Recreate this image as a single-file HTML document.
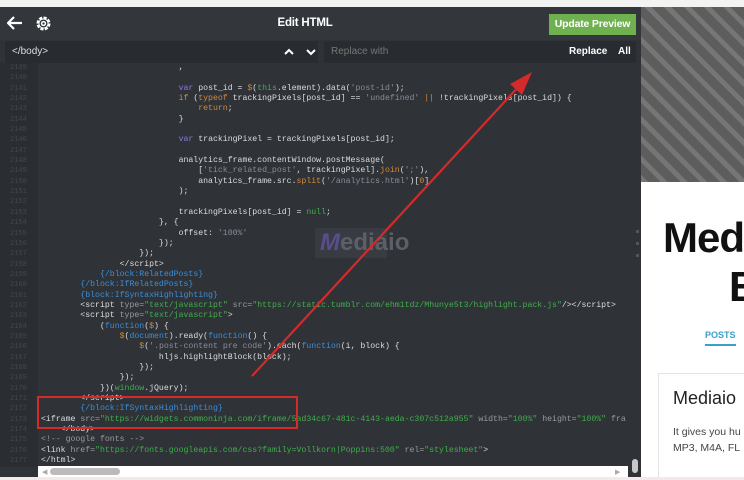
<!DOCTYPE html>
<html><head><style>
*{margin:0;padding:0;box-sizing:border-box}
body{width:744px;height:480px;overflow:hidden;background:#fff;position:relative;font-family:"Liberation Sans",sans-serif}
.ed{position:absolute;left:0;top:7px;width:641px;height:473px;background:#2f3338}
.hdr{position:absolute;left:0;top:0;width:641px;height:33px;background:#33373c}
.title{position:absolute;left:0;width:610px;top:10px;text-align:center;color:#fff;font-weight:bold;font-size:11.5px;letter-spacing:-0.2px}
.btn{position:absolute;left:549px;top:7px;width:87px;height:21px;background:#6fb04f;color:#fff;font-weight:bold;font-size:10.5px;text-align:center;line-height:21px;letter-spacing:-0.2px}
.sb{position:absolute;top:34px;height:22px;background:#282b30;font-size:10px;line-height:22px}
.code{position:absolute;left:0;top:56px;width:630px;height:404px;background:#2f3338;overflow:hidden}
.gut{position:absolute;left:0;top:0;width:38px;height:404px;background:#2a2d31}
.ln{position:absolute;left:41px;top:0;font-family:"Liberation Mono",monospace;font-size:8.2px;line-height:10.34px;color:#dcdcdc;white-space:pre}
.gn{position:absolute;left:10px;top:0;font-family:"Liberation Mono",monospace;font-size:7px;line-height:10.34px;color:#44484e;white-space:pre}
.k{color:#8b78e0}.o{color:#d4883a}.s{color:#8a8a9a}.g{color:#3fae4a}.b{color:#3c8dd8}.a{color:#9a9a9a}.n{color:#3fae4a}
.hs{position:absolute;left:38px;top:459px;width:590px;height:12px;background:#fff}
.pv{position:absolute;left:641px;top:7px;width:103px;height:473px;background:#fff;overflow:hidden}
.pat{position:absolute;left:0;top:0;width:103px;height:175px;background:#5d5d5d;background-image:repeating-linear-gradient(45deg,#767676 0 5px,#5d5d5d 5px 14px)}
</style></head><body>
<div style="position:absolute;left:0;top:0;width:744px;height:7px;background:#f3f3f1"></div>
<div class="ed">
<div class="hdr">
<svg style="position:absolute;left:7px;top:9px" width="16" height="14" viewBox="0 0 16 14"><path d="M15 7H2M7 1L1 7l6 6" stroke="#fff" stroke-width="2.2" fill="none"/></svg>
<svg style="position:absolute;left:35px;top:8px" width="17" height="17" viewBox="0 0 16 16"><circle cx="8" cy="8" r="5.5" stroke="#fff" stroke-width="2.2" fill="none" stroke-dasharray="3 1.3"/><circle cx="8" cy="8" r="4.3" stroke="#fff" stroke-width="1" fill="none"/><circle cx="8" cy="8" r="1.8" stroke="#fff" stroke-width="1.4" fill="none"/></svg>
<div class="title">Edit HTML</div>
<div class="btn">Update Preview</div>
</div>
<div class="sb" style="left:5px;width:313px;color:#ddd;padding-left:7px">&lt;/body&gt;
<svg style="position:absolute;left:279px;top:7px" width="10" height="8" viewBox="0 0 10 8"><path d="M1 6L5 2l4 4" stroke="#fff" stroke-width="2" fill="none"/></svg>
<svg style="position:absolute;left:301px;top:7px" width="10" height="8" viewBox="0 0 10 8"><path d="M1 2l4 4 4-4" stroke="#fff" stroke-width="2" fill="none"/></svg></div>
<div class="sb" style="left:324px;width:312px;color:#777;padding-left:7px">Replace with<span style="position:absolute;left:245px;color:#fff;font-weight:bold">Replace</span><span style="position:absolute;left:294px;color:#fff;font-weight:bold">All</span></div>
<div class="code">
<div class="gut"><div class="gn">2139
2140
2141
2142
2143
2144
2145
2146
2147
2148
2149
2150
2151
2152
2153
2154
2155
2156
2157
2158
2159
2160
2161
2162
2163
2164
2165
2166
2167
2168
2169
2170
2171
2172
2173
2174
2175
2176
2177</div></div>
<div class="ln">                            ,

                            <span class="k">var</span> post_id = <span class="o">$</span>(<span class="g">this</span>.element).data(<span class="s">'post-id'</span>);
                            <span class="o">if</span> (<span class="o">typeof</span> trackingPixels[post_id] == <span class="s">'undefined'</span> <span class="o">||</span> !trackingPixels[post_id]) {
                                <span class="o">return</span>;
                            }

                            <span class="k">var</span> trackingPixel = trackingPixels[post_id];

                            analytics_frame.contentWindow.postMessage(
                                [<span class="s">'tick_related_post'</span>, trackingPixel].<span class="o">join</span>(<span class="s">';'</span>),
                                analytics_frame.src.<span class="o">split</span>(<span class="s">'/analytics.html'</span>)[<span class="o">0</span>]
                            );

                            trackingPixels[post_id] = <span class="n">null</span>;
                        }, {
                            offset: <span class="s">'100%'</span>
                        });
                    });
                &lt;/script&gt;
            <span class="b">{/block:RelatedPosts}</span>
        <span class="b">{/block:IfRelatedPosts}</span>
        <span class="b">{block:IfSyntaxHighlighting}</span>
        &lt;script <span class="a">type=</span><span class="g">"text/javascript"</span> <span class="a">src=</span><span class="g">"https://static.tumblr.com/ehm1tdz/Mhunye5t3/highlight.pack.js"</span>/&gt;&lt;/script&gt;
        &lt;script <span class="a">type=</span><span class="g">"text/javascript"</span>&gt;
            (<span class="b">function</span>(<span class="o">$</span>) {
                <span class="o">$</span>(<span class="b">document</span>).ready(<span class="b">function</span>() {
                    <span class="o">$</span>(<span class="s">'.post-content pre code'</span>).each(<span class="b">function</span>(i, block) {
                        hljs.highlightBlock(block);
                    });
                });
            })(<span class="g">window</span>.jQuery);
        &lt;/script&gt;
        <span class="b">{/block:IfSyntaxHighlighting}</span>
&lt;iframe <span class="a">src=</span><span class="g">"https://widgets.commoninja.com/iframe/5ad34c67-481c-4143-aeda-c307c512a955"</span> <span class="a">width=</span><span class="g">"100%"</span> <span class="a">height=</span><span class="g">"100%"</span> <span class="a">fra</span>
    &lt;/body&gt;
<span class="a">&lt;!-- google fonts --&gt;</span>
&lt;link <span class="a">href=</span><span class="g">"https://fonts.googleapis.com/css?family=Vollkorn|Poppins:500"</span> <span class="a">rel=</span><span class="g">"stylesheet"</span>&gt;
&lt;/html&gt;</div>
<div style="position:absolute;left:315px;top:165px;width:72px;height:30px;background:#383b42"></div>
<div style="position:absolute;left:320px;top:166px;font-size:24px;font-weight:bold;color:#5a4d8c;font-style:italic">M<span style="color:#5c5f66;font-style:normal">ediaio</span></div>
</div>
<div class="hs"><div style="position:absolute;left:12px;top:2px;width:70px;height:7px;background:#bbb;border-radius:4px"></div><div style="position:absolute;left:4px;top:2px;font-size:7px;color:#aaa">&#9664;</div><div style="position:absolute;left:577px;top:2px;font-size:7px;color:#aaa">&#9654;</div></div>
<div style="position:absolute;left:632px;top:452px;width:6px;height:14px;background:#c8c8c8;border-radius:3px"></div>
<div style="position:absolute;left:636px;top:223px;width:3px;height:3px;background:#555"></div>
<div style="position:absolute;left:636px;top:235px;width:3px;height:3px;background:#555"></div>
<div style="position:absolute;left:636px;top:247px;width:3px;height:3px;background:#555"></div>
</div>
<div class="pv">
<div class="pat"></div>
<div style="position:absolute;left:22px;top:207px;font-size:42px;font-weight:bold;color:#111;letter-spacing:-1px">Med</div>
<div style="position:absolute;left:88px;top:256px;font-size:42px;font-weight:bold;color:#111">B</div>
<div style="position:absolute;left:64px;top:323px;font-size:9px;font-weight:bold;color:#3a9fcc">POSTS</div>
<div style="position:absolute;left:64px;top:337px;width:31px;height:2px;background:#3a9fcc"></div>
<div style="position:absolute;left:17px;top:366px;width:100px;height:120px;border:1px solid #e4e4e4"></div>
<div style="position:absolute;left:32px;top:381px;font-size:18px;color:#222">Mediaio</div>
<div style="position:absolute;left:32px;top:417px;font-size:10.5px;color:#444;line-height:16px;white-space:nowrap">It gives you hu<br>MP3, M4A, FL</div>
</div>
<div style="position:absolute;left:0;top:477px;width:744px;height:3px;background:#f4e8e8"></div>
<div style="position:absolute;left:37px;top:396px;width:261px;height:33px;border:2px solid #d42a2a"></div>
<svg style="position:absolute;left:0;top:0" width="744" height="480"><line x1="252" y1="376" x2="520" y2="85" stroke="#d42a2a" stroke-width="2.2"/><polygon points="532,72 510,84 522,95" fill="#d42a2a"/></svg>
</body></html>
